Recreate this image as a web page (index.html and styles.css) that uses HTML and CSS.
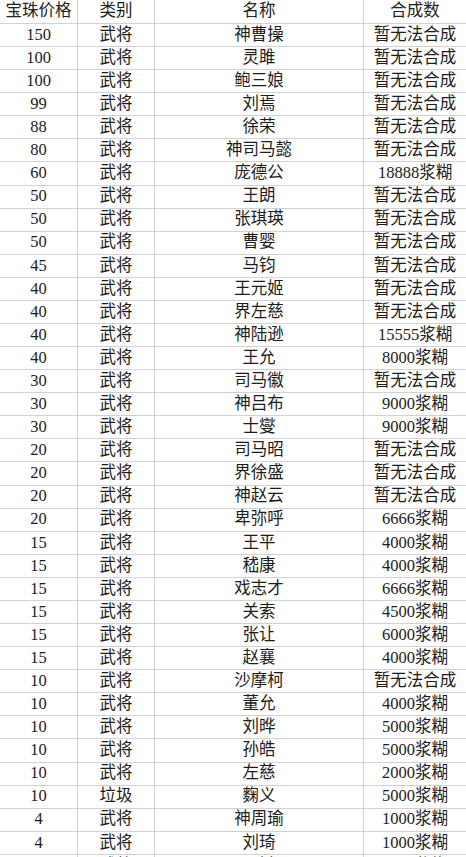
FILE: index.html
```html
<!DOCTYPE html>
<html lang="zh-CN">
<head>
<meta charset="utf-8">
<title>宝珠价格</title>
<link rel="stylesheet" href="styles.css">
</head>
<body>
<div class="sheet">
  <div class="cell head">宝珠价格</div><div class="cell head">类别</div><div class="cell head">名称</div><div class="cell head last">合成数</div>
  <div class="cell">150</div><div class="cell">武将</div><div class="cell">神曹操</div><div class="cell last">暂无法合成</div>
  <div class="cell">100</div><div class="cell">武将</div><div class="cell">灵雎</div><div class="cell last">暂无法合成</div>
  <div class="cell">100</div><div class="cell">武将</div><div class="cell">鲍三娘</div><div class="cell last">暂无法合成</div>
  <div class="cell">99</div><div class="cell">武将</div><div class="cell">刘焉</div><div class="cell last">暂无法合成</div>
  <div class="cell">88</div><div class="cell">武将</div><div class="cell">徐荣</div><div class="cell last">暂无法合成</div>
  <div class="cell">80</div><div class="cell">武将</div><div class="cell">神司马懿</div><div class="cell last">暂无法合成</div>
  <div class="cell">60</div><div class="cell">武将</div><div class="cell">庞德公</div><div class="cell last">18888浆糊</div>
  <div class="cell">50</div><div class="cell">武将</div><div class="cell">王朗</div><div class="cell last">暂无法合成</div>
  <div class="cell">50</div><div class="cell">武将</div><div class="cell">张琪瑛</div><div class="cell last">暂无法合成</div>
  <div class="cell">50</div><div class="cell">武将</div><div class="cell">曹婴</div><div class="cell last">暂无法合成</div>
  <div class="cell">45</div><div class="cell">武将</div><div class="cell">马钧</div><div class="cell last">暂无法合成</div>
  <div class="cell">40</div><div class="cell">武将</div><div class="cell">王元姬</div><div class="cell last">暂无法合成</div>
  <div class="cell">40</div><div class="cell">武将</div><div class="cell">界左慈</div><div class="cell last">暂无法合成</div>
  <div class="cell">40</div><div class="cell">武将</div><div class="cell">神陆逊</div><div class="cell last">15555浆糊</div>
  <div class="cell">40</div><div class="cell">武将</div><div class="cell">王允</div><div class="cell last">8000浆糊</div>
  <div class="cell">30</div><div class="cell">武将</div><div class="cell">司马徽</div><div class="cell last">暂无法合成</div>
  <div class="cell">30</div><div class="cell">武将</div><div class="cell">神吕布</div><div class="cell last">9000浆糊</div>
  <div class="cell">30</div><div class="cell">武将</div><div class="cell">士燮</div><div class="cell last">9000浆糊</div>
  <div class="cell">20</div><div class="cell">武将</div><div class="cell">司马昭</div><div class="cell last">暂无法合成</div>
  <div class="cell">20</div><div class="cell">武将</div><div class="cell">界徐盛</div><div class="cell last">暂无法合成</div>
  <div class="cell">20</div><div class="cell">武将</div><div class="cell">神赵云</div><div class="cell last">暂无法合成</div>
  <div class="cell">20</div><div class="cell">武将</div><div class="cell">卑弥呼</div><div class="cell last">6666浆糊</div>
  <div class="cell">15</div><div class="cell">武将</div><div class="cell">王平</div><div class="cell last">4000浆糊</div>
  <div class="cell">15</div><div class="cell">武将</div><div class="cell">嵇康</div><div class="cell last">4000浆糊</div>
  <div class="cell">15</div><div class="cell">武将</div><div class="cell">戏志才</div><div class="cell last">6666浆糊</div>
  <div class="cell">15</div><div class="cell">武将</div><div class="cell">关索</div><div class="cell last">4500浆糊</div>
  <div class="cell">15</div><div class="cell">武将</div><div class="cell">张让</div><div class="cell last">6000浆糊</div>
  <div class="cell">15</div><div class="cell">武将</div><div class="cell">赵襄</div><div class="cell last">4000浆糊</div>
  <div class="cell">10</div><div class="cell">武将</div><div class="cell">沙摩柯</div><div class="cell last">暂无法合成</div>
  <div class="cell">10</div><div class="cell">武将</div><div class="cell">董允</div><div class="cell last">4000浆糊</div>
  <div class="cell">10</div><div class="cell">武将</div><div class="cell">刘晔</div><div class="cell last">5000浆糊</div>
  <div class="cell">10</div><div class="cell">武将</div><div class="cell">孙皓</div><div class="cell last">5000浆糊</div>
  <div class="cell">10</div><div class="cell">武将</div><div class="cell">左慈</div><div class="cell last">2000浆糊</div>
  <div class="cell">10</div><div class="cell">垃圾</div><div class="cell">麴义</div><div class="cell last">5000浆糊</div>
  <div class="cell">4</div><div class="cell">武将</div><div class="cell">神周瑜</div><div class="cell last">1000浆糊</div>
  <div class="cell">4</div><div class="cell">武将</div><div class="cell">刘琦</div><div class="cell last">1000浆糊</div>
  <div class="cell">4</div><div class="cell">武将</div><div class="cell">界孙权</div><div class="cell last">1000浆糊</div>
</div>
</body>
</html>
```
FILE: styles.css
```css
html, body {
  margin: 0;
  padding: 0;
  background: #ffffff;
  overflow: hidden;
}

.sheet {
  display: grid;
  grid-template-columns: 78px 77px 209px 102px;
  grid-template-rows: 24px;
  grid-auto-rows: 23.08px;
  width: 466px;
  font-family: "Liberation Serif", "Noto Sans CJK SC", serif;
  font-size: 16.5px;
  color: #1c1c1c;
}

.cell {
  box-sizing: border-box;
  display: flex;
  align-items: center;
  justify-content: center;
  border-right: 1px solid #d2d2d2;
  border-bottom: 1px solid #d2d2d2;
  white-space: nowrap;
  overflow: hidden;
  line-height: 1;
}

.cell.last {
  border-right: none;
}

.head {
  color: #222222;
}
```
